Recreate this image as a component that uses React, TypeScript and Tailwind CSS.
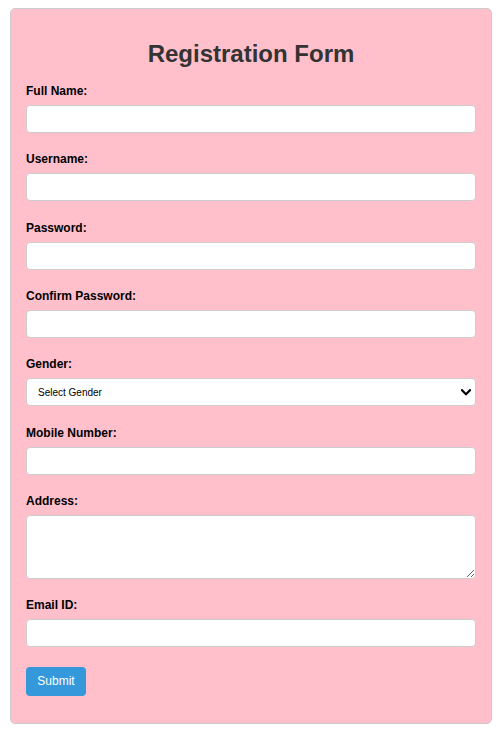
import React from "react";

const labelCls = "block text-[12px] leading-[14px] font-bold text-black mb-[7px]";
const inputCls = "block w-full h-[28px] bg-white border border-[#cccccc] rounded-[4px] px-[8px] text-[13px] outline-none";

function Field({ label, type = "text" }: { label: string; type?: string }) {
  return (
    <div className="mb-[19.33px]">
      <label className={labelCls}>{label}</label>
      <input type={type} className={inputCls} />
    </div>
  );
}

export default function App() {
  return (
    <div className="w-[502px] bg-white pt-[8px] pb-[16px]" style={{ fontFamily: '"Liberation Sans", Arial, sans-serif' }}>
      <div className="mx-[10px] bg-[#ffc0cb] border border-[#cccccc] rounded-[5px] px-[15px] pt-[31px] pb-[27px]">
        <h2 className="text-center text-[24px] leading-[28px] font-bold text-[#333333] mb-[16px]">Registration Form</h2>
        <form onSubmit={(e) => e.preventDefault()}>
          <Field label="Full Name:" />
          <Field label="Username:" />
          <Field label="Password:" type="password" />
          <Field label="Confirm Password:" type="password" />
          <div className="mb-[19.33px]">
            <label className={labelCls}>Gender:</label>
            <div className="relative">
              <select className="block w-full h-[28px] appearance-none bg-white border border-[#cccccc] rounded-[4px] pl-[11px] text-[10px] text-black outline-none">
                <option>Select Gender</option>
                <option>Male</option>
                <option>Female</option>
                <option>Other</option>
              </select>
              <svg className="absolute right-[5px] top-[11px] pointer-events-none" width="10" height="7" viewBox="0 0 10 7">
                <path d="M1 1.2 L5 5.2 L9 1.2" fill="none" stroke="#000" strokeWidth="2.2" strokeLinecap="square" />
              </svg>
            </div>
          </div>
          <Field label="Mobile Number:" type="tel" />
          <div className="mb-[19.33px]">
            <label className={labelCls}>Address:</label>
            <textarea className="block w-full h-[64px] bg-white border border-[#cccccc] rounded-[4px] px-[8px] py-[6px] text-[13px] outline-none resize-y" />
          </div>
          <Field label="Email ID:" type="email" />
          <button type="submit" className="block h-[29px] w-[60px] bg-[#3498db] text-white text-[12px] rounded-[4px] cursor-pointer">
            Submit
          </button>
        </form>
      </div>
    </div>
  );
}
